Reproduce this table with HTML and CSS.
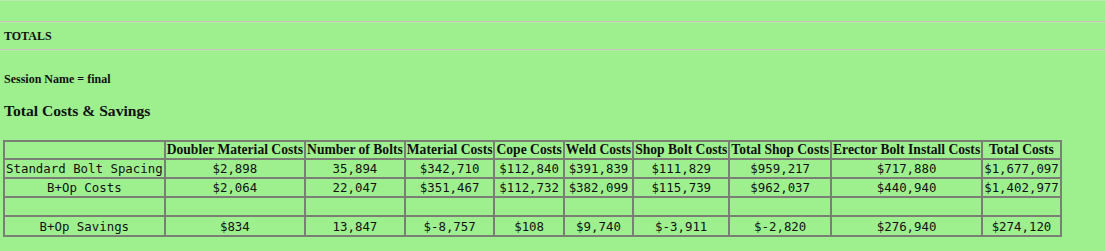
FILE: index.html
```html
<!DOCTYPE html>
<html>
<head>
<meta charset="utf-8">
<link rel="stylesheet" href="styles.css">
</head>
<body>
<div class="page">
  <hr class="rule rule-top">
  <div class="section-title">TOTALS</div>
  <hr class="rule">
  <div class="content">
    <div class="session">Session Name = final</div>
    <h3 class="heading">Total Costs &amp; Savings</h3>
    <table class="costs">
      <thead>
        <tr>
          <th></th>
          <th>Doubler Material Costs</th>
          <th>Number of Bolts</th>
          <th>Material Costs</th>
          <th>Cope Costs</th>
          <th>Weld Costs</th>
          <th>Shop Bolt Costs</th>
          <th>Total Shop Costs</th>
          <th>Erector Bolt Install Costs</th>
          <th>Total Costs</th>
        </tr>
      </thead>
      <tbody>
        <tr>
          <td>Standard Bolt Spacing</td>
          <td>$2,898</td><td>35,894</td><td>$342,710</td><td>$112,840</td><td>$391,839</td><td>$111,829</td><td>$959,217</td><td>$717,880</td><td>$1,677,097</td>
        </tr>
        <tr>
          <td>B+Op Costs</td>
          <td>$2,064</td><td>22,047</td><td>$351,467</td><td>$112,732</td><td>$382,099</td><td>$115,739</td><td>$962,037</td><td>$440,940</td><td>$1,402,977</td>
        </tr>
        <tr class="empty">
          <td></td><td></td><td></td><td></td><td></td><td></td><td></td><td></td><td></td><td></td>
        </tr>
        <tr>
          <td>B+Op Savings</td>
          <td>$834</td><td>13,847</td><td>$-8,757</td><td>$108</td><td>$9,740</td><td>$-3,911</td><td>$-2,820</td><td>$276,940</td><td>$274,120</td>
        </tr>
      </tbody>
    </table>
  </div>
</div>
</body>
</html>
```

FILE: styles.css
```css
html, body {
  margin: 0;
  padding: 0;
  background: #9ef08f;
}
body {
  font-family: "Liberation Serif", "Times New Roman", serif;
  color: #111;
}
.page {
  padding-top: 1px;
  border-top: 1px solid #b8e8ae;
}
.rule {
  margin: 0;
  border: 0;
  border-top: 1px solid #c4c4b8;
  border-bottom: 1px solid #b6eaa8;
  height: 0;
}
.rule-top {
  margin-top: 19px;
}
.section-title {
  font-weight: bold;
  font-size: 12px;
  padding: 6px 4px 0 4px;
  height: 20px;
}
.content {
  padding: 0 4px;
}
.session {
  font-weight: bold;
  font-size: 12px;
  margin-top: 21px;
}
.heading {
  font-size: 15.6px;
  margin: 15px 0 0 0;
}
.costs {
  margin-top: 20px;
  margin-left: -1px;
  border-collapse: collapse;
  border: 2px solid #7a7f76;
}
.costs th, .costs td {
  border: 2px solid #7a7f76;
  padding: 0 1px;
  text-align: center;
  white-space: nowrap;
}
.costs th {
  font-family: "Liberation Serif", "Times New Roman", serif;
  font-weight: bold;
  font-size: 13.6px;
  height: 16px;
}
.costs td {
  font-family: "DejaVu Sans Mono", "Liberation Mono", monospace;
  font-size: 12.4px;
  height: 17px;
}
.costs tr.empty td {
  height: 17px;
}
.costs tbody tr:last-child td {
  height: 18px;
}
```
